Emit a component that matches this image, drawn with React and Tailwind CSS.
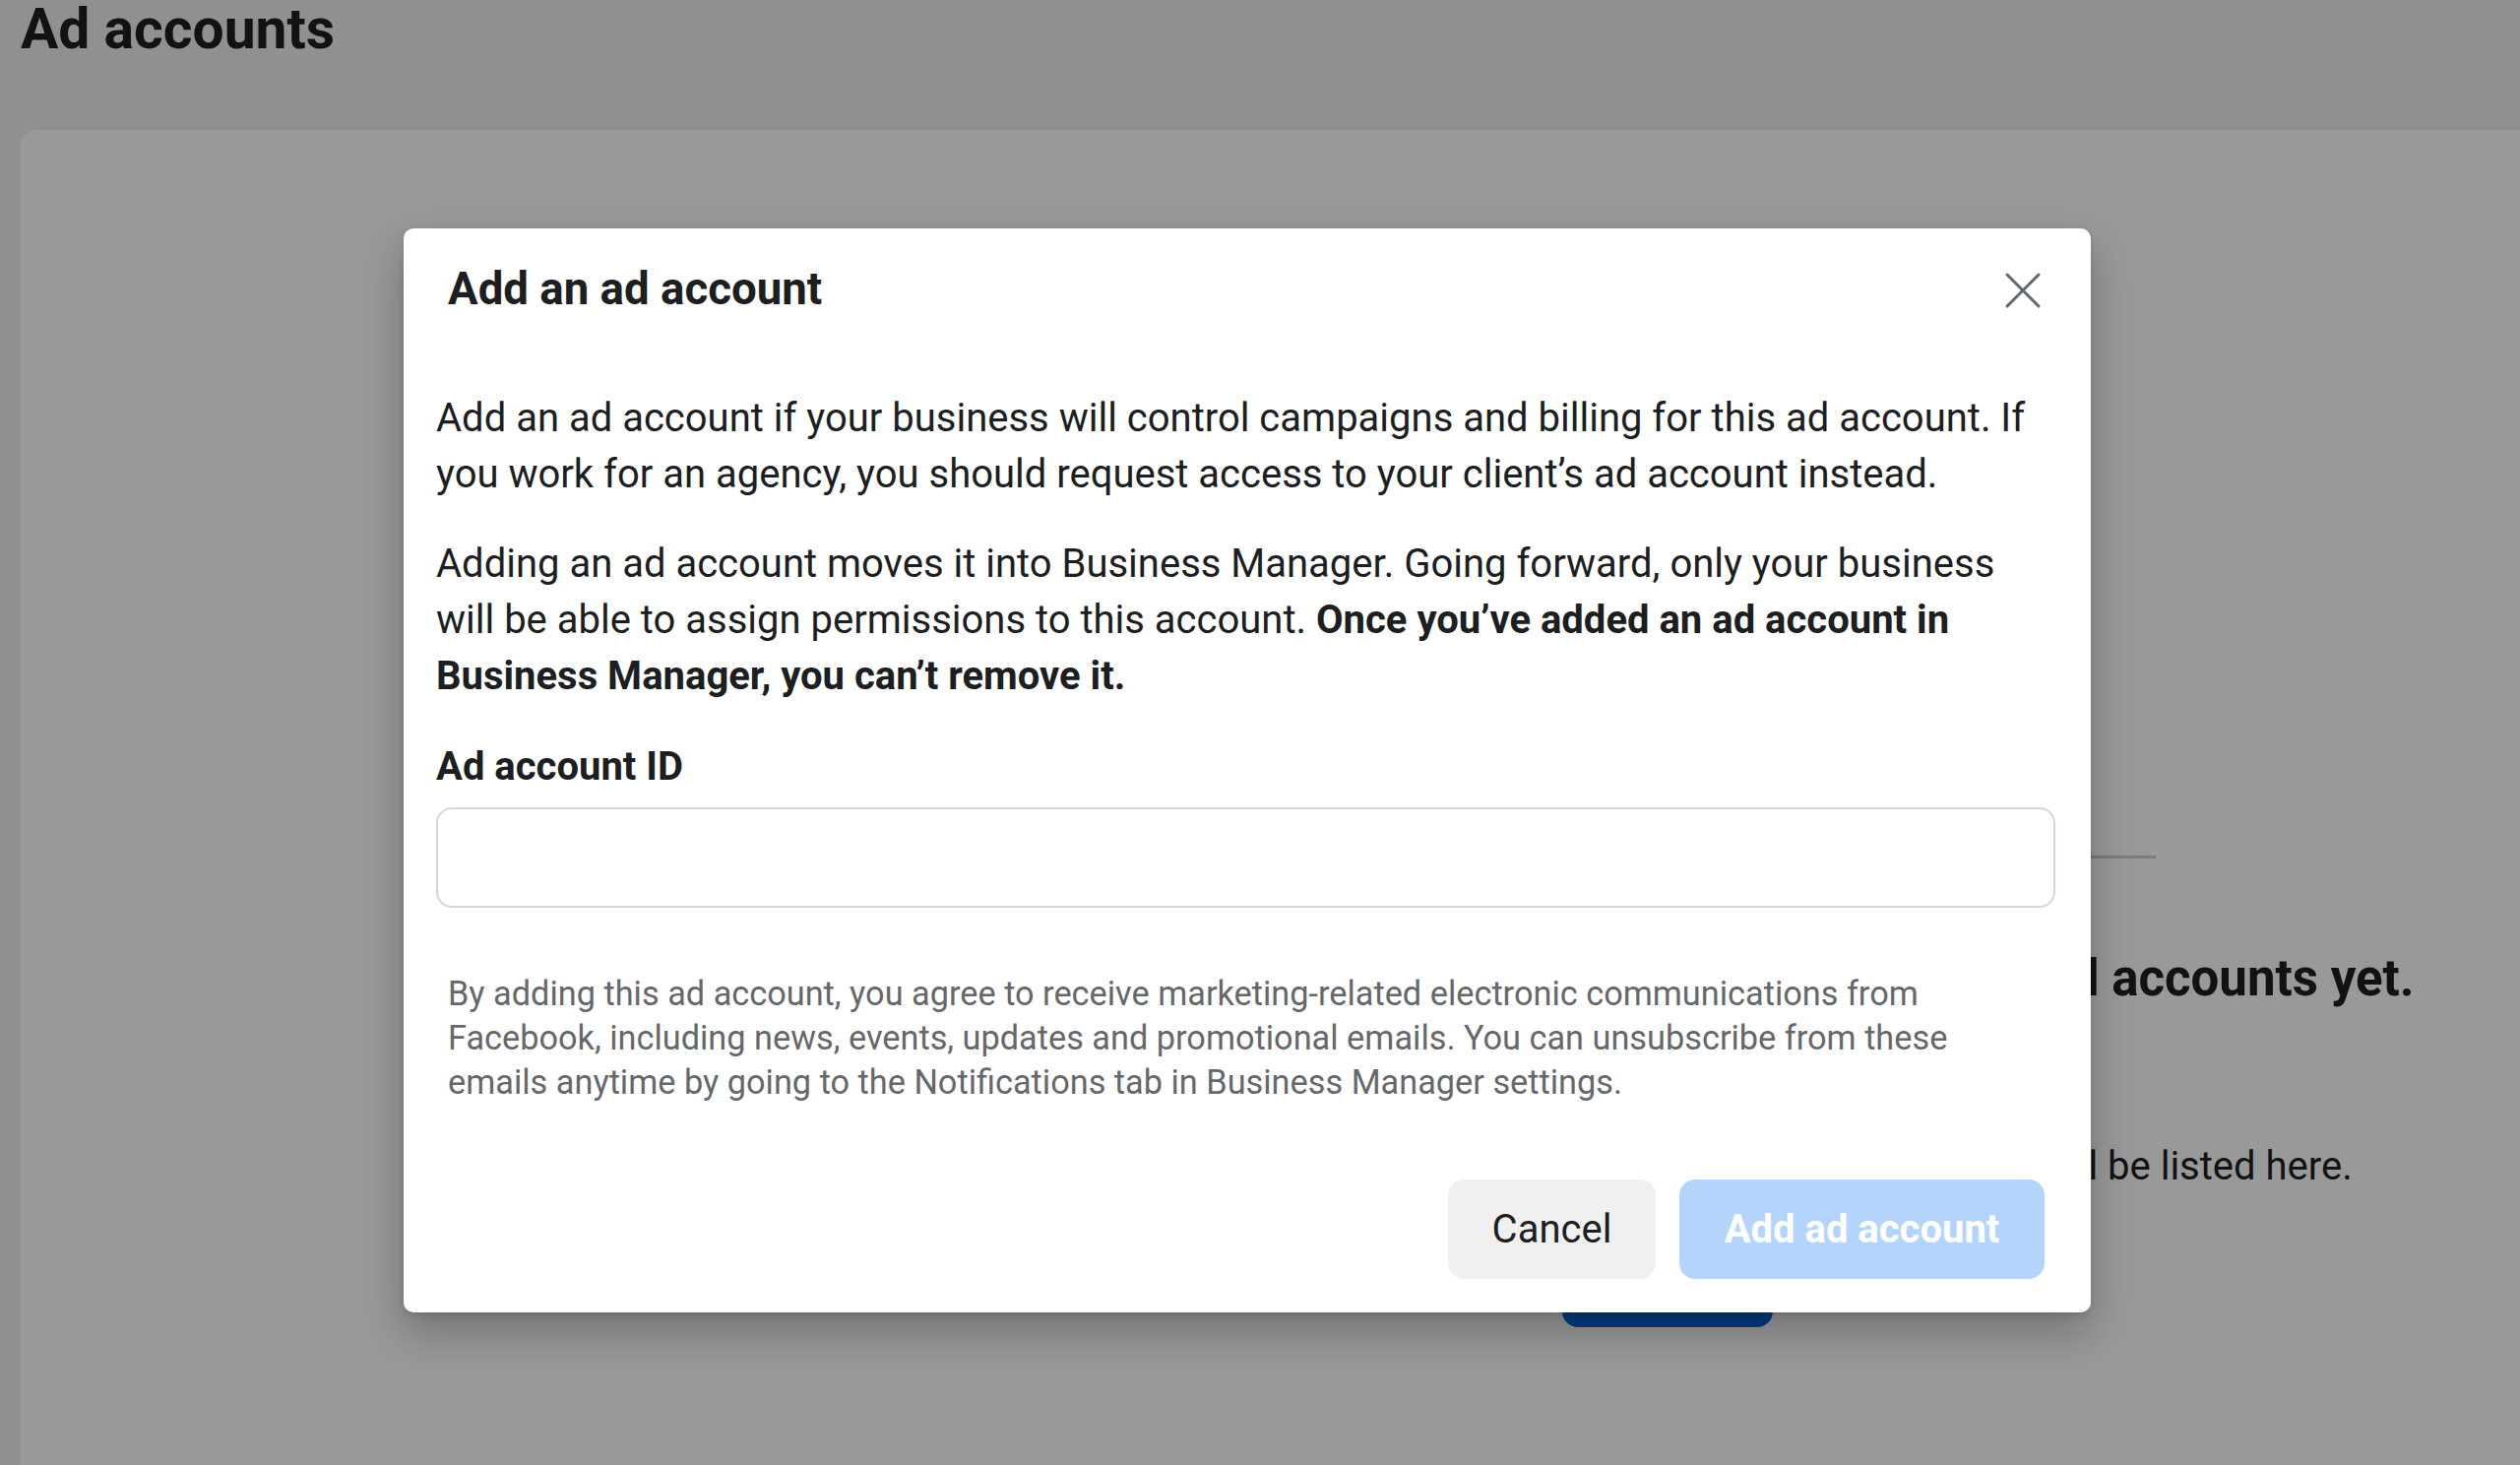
import React from 'react';

const CloseIcon = () => (
    <svg width="38" height="38" viewBox="0 0 38 38" fill="none">
        <path d="M3 3L35 35M35 3L3 35" stroke="#606770" strokeWidth="3" strokeLinecap="round" />
    </svg>
);

const AddAdAccountModal = () => (
    <div className="absolute left-[410px] top-[232px] w-[1714px] rounded-[10px] bg-white pb-[34px] shadow-[0_20px_46px_0_rgba(0,0,0,0.25),0_3px_7px_0_rgba(0,0,0,0.12)]">
        <div className="flex h-[124px] items-center justify-between pl-[45px] pr-[50px]">
            <h2 className="text-[45.6px] font-bold leading-none text-[#1c1e21]">Add an ad account</h2>
            <button className="mt-[2px] flex h-[38px] w-[38px] items-center justify-center">
                <CloseIcon />
            </button>
        </div>

        <div className="pl-[33px] pr-[36px]">
            <p className="mt-[40px] whitespace-nowrap text-[40px] leading-[57px] text-[#1c1e21]">
                Add an ad account if your business will control campaigns and billing for this ad account. If
                <br />
                you work for an agency, you should request access to your client’s ad account instead.
            </p>
            <p className="mt-[34px] whitespace-nowrap text-[40px] leading-[57px] text-[#1c1e21]">
                Adding an ad account moves it into Business Manager. Going forward, only your business
                <br />
                will be able to assign permissions to this account.{' '}
                <span className="font-bold">Once you’ve added an ad account in</span>
                <br />
                <span className="font-bold">Business Manager, you can’t remove it.</span>
            </p>

            <label className="mt-[35px] block text-[40px] font-bold leading-[57px] text-[#1c1e21]">Ad account ID</label>
            <input
                type="text"
                className="mt-[13px] block h-[102px] w-full rounded-[16px] border-2 border-[#d3d6da] bg-white px-[24px] text-[40px] outline-none"
            />

            <p className="mt-[65px] whitespace-nowrap pl-[12px] text-[34.3px] leading-[44.8px] text-[#65676b]">
                By adding this ad account, you agree to receive marketing-related electronic communications from
                <br />
                Facebook, including news, events, updates and promotional emails. You can unsubscribe from these
                <br />
                emails anytime by going to the Notifications tab in Business Manager settings.
            </p>

            <div className="mt-[77px] mr-[11px] flex justify-end gap-[24px]">
                <button className="h-[101px] w-[211px] rounded-[16px] bg-[#f0f0f0] text-[40px] text-[#1c1e21]">
                    Cancel
                </button>
                <button className="h-[101px] w-[371px] rounded-[16px] bg-[#b3d4fb] text-[40px] font-bold text-white">
                    Add ad account
                </button>
            </div>
        </div>
    </div>
);

export default function App() {
    return (
        <div className="relative min-h-screen h-[1488px] overflow-hidden bg-[#8f9092] font-[Roboto,'Liberation_Sans',sans-serif]">
            <div className="flex h-full flex-col">
                <h1 className="pl-[21px] pt-[1px] text-[57px] font-bold leading-none text-[#111214]">Ad accounts</h1>

                {/* page card, dimmed by the overlay */}
                <div className="mt-[74px] ml-[21px] flex-1 rounded-tl-[16px] bg-[#999999]">
                    <div className="flex flex-col items-start pl-[1609px] pt-[737px]">
                        <div className="h-[3px] w-[560px] bg-[#7a7d80]" />
                        <h3 className="ml-[6px] mt-[92px] whitespace-nowrap text-[51px] font-bold leading-[60px] text-[#111214]">
                            You don’t have any ad accounts yet.
                        </h3>
                        <p className="-ml-[21px] mt-[132px] whitespace-nowrap text-[40px] leading-[57px] text-[#111214]">
                            Ad accounts that you add will be listed here.
                        </p>
                        <button className="-ml-[43px] mt-[34px] h-[101px] w-[214px] rounded-[16px] bg-[#073c84] text-[40px] font-bold text-white">
                            Add
                        </button>
                    </div>
                </div>
            </div>

            <AddAdAccountModal />
        </div>
    );
}
